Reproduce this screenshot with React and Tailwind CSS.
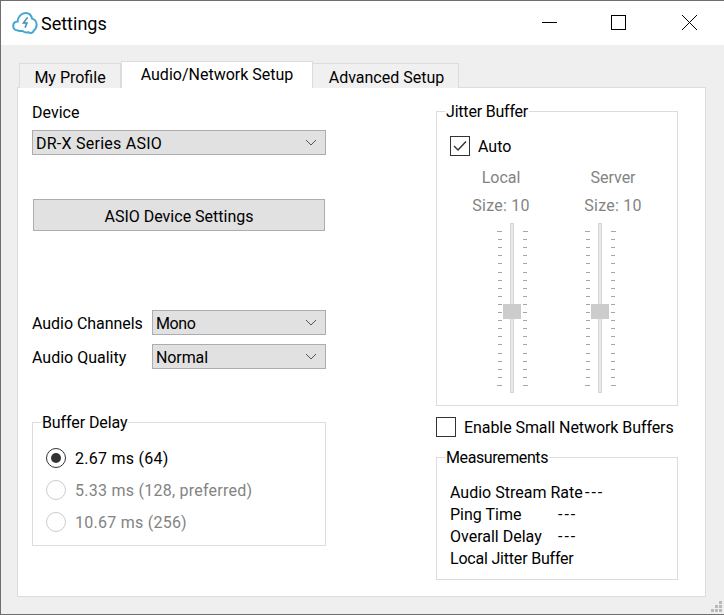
import React from 'react';

const tickRows = [231, 239, 247, 255, 263, 272, 280, 288, 296, 304, 312, 320, 328, 336, 344, 353, 361, 369, 377, 385];

// cloud logo in the title bar
function Logo() {
    return (
        <svg width="26" height="24" viewBox="0 0 26 24" className="shrink-0">
            <path
                d="M6 19.5 C2.8 19.5 1.2 17.2 1.2 15 C1.2 12.6 3 10.8 5.6 10.6 C6 5.6 9.6 2 13.6 2 C17 2 19.4 4.4 20 7.6 C22.8 8.4 24.6 10.8 24.6 13.8 C24.6 16.6 23.4 18.4 21.8 19.6 C21.2 22 18.6 22.6 16.8 21.2 C14.4 21.8 12 21.2 10.6 20 C9 20.2 7.4 20 6 19.5 Z"
                fill="#ffffff"
                stroke="#45a6d2"
                strokeWidth="2"
            />
            <path d="M15.6 6.4 L11.4 12 H15 L13 16.6" fill="none" stroke="#3b8fb8" strokeWidth="1.5" />
        </svg>
    );
}

function Chevron() {
    return (
        <svg width="12" height="7" viewBox="0 0 12 7" className="shrink-0">
            <path d="M1 1 L6 6 L11 1" fill="none" stroke="#555" strokeWidth="1" />
        </svg>
    );
}

function Select({ value, className, textClass }) {
    return (
        <div className={`flex h-[25px] items-center justify-between border border-[#adadad] bg-[#e1e1e1] pl-[3px] pr-[8px] ${className}`}>
            <span className={`pt-[2px] leading-[21px] ${textClass}`}>{value}</span>
            <Chevron />
        </div>
    );
}

function Group({ title, className, titleClass, children }) {
    return (
        <fieldset className={`border border-[#dcdcdc] ${className}`}>
            <legend className={`ml-[8px] px-[1px] pt-[2px] leading-[20px] ${titleClass}`}>{title}</legend>
            {children}
        </fieldset>
    );
}

function Check({ checked }) {
    return (
        <span className="flex h-[20px] w-[20px] shrink-0 items-center justify-center border border-[#333333] bg-white">
            {checked && (
                <svg width="14" height="12" viewBox="0 0 14 12">
                    <path d="M1 6 L5 10 L13 1.5" fill="none" stroke="#333333" strokeWidth="1.4" />
                </svg>
            )}
        </span>
    );
}

function Radio({ label, checked }) {
    return (
        <div className={`flex h-[32px] items-center gap-[9px] ${checked ? 'text-black' : 'text-[#838383]'}`}>
            <span className={`flex h-[20px] w-[20px] items-center justify-center rounded-full border ${checked ? 'border-[#333333]' : 'border-[#cccccc]'}`}>
                {checked && <span className="h-[10px] w-[10px] rounded-full bg-[#333333]" />}
            </span>
            <span className="pt-[1px] tracking-[0.25px]">{label}</span>
        </div>
    );
}

// vertical slider with tick marks on both sides
function Slider() {
    return (
        <div className="relative h-[170px] w-[32px]">
            <svg width="32" height="170" viewBox="0 0 32 170" className="block">
                {tickRows.map((y, i) => {
                    const long = i === 0 || i === tickRows.length - 1;
                    return (
                        <g key={y} stroke="#a8a89a" strokeWidth="1">
                            <line x1={long ? 0 : 1} x2="5" y1={y - 223 + 0.5} y2={y - 223 + 0.5} />
                            <line x1="26" x2={long ? 31 : 30} y1={y - 223 + 0.5} y2={y - 223 + 0.5} />
                        </g>
                    );
                })}
                <rect x="13.5" y="0.5" width="3" height="169" fill="#e7eae7" stroke="#d6d6d6" />
            </svg>
            <div className="absolute left-[6px] top-[81px] h-[15px] w-[18px] bg-[#cccccc]" />
        </div>
    );
}

function JitterColumn({ title, sliderClass }) {
    return (
        <div className="flex w-[88px] flex-col items-center text-[#838383]">
            <div className="h-[28px] leading-[28px]">{title}</div>
            <div className="h-[28px] leading-[28px] tracking-[0.25px]">Size: 10</div>
            <div className={`mt-[3px] ${sliderClass}`}>
                <Slider />
            </div>
        </div>
    );
}

function Measure({ label, value, labelWidth, labelClass }) {
    return (
        <div className="flex h-[22px] items-center">
            <span className={`${labelWidth} ${labelClass}`}>{label}</span>
            <span className="tracking-[2px]">{value}</span>
        </div>
    );
}

function AudioTab() {
    return (
        <div className="flex h-[510px] border border-[#dcdcdc] bg-white pl-[14px] pt-[12px]">
            {/* left column */}
            <div className="flex w-[294px] flex-col">
                <div className="h-[30px] leading-[26px]">Device</div>
                <Select value="DR-X Series ASIO" className="w-full" textClass="tracking-[0.25px]" />
                <button className="mx-[1px] mt-[44px] h-[32px] border border-[#adadad] bg-[#e1e1e1] pt-[3px] text-center">
                    ASIO Device Settings
                </button>
                <div className="mt-[79px] flex h-[25px] items-center justify-between">
                    <span className="pt-[2px] leading-[22px] tracking-[-0.05px]">Audio Channels</span>
                    <Select value="Mono" className="w-[174px]" textClass="tracking-[-0.4px]" />
                </div>
                <div className="mt-[9px] flex h-[25px] items-center justify-between">
                    <span className="pt-[2px] leading-[22px]">Audio Quality</span>
                    <Select value="Normal" className="w-[174px]" textClass="tracking-[-0.1px]" />
                </div>
                <Group title="Buffer Delay" className="mt-[42px] h-[135px]" titleClass="tracking-[-0.1px]">
                    <div className="pl-[13px] pt-[9px]">
                        <Radio label="2.67 ms (64)" checked />
                        <Radio label="5.33 ms (128, preferred)" />
                        <Radio label="10.67 ms (256)" />
                    </div>
                </Group>
            </div>

            {/* right column */}
            <div className="ml-[110px] flex w-[242px] flex-col">
                <Group title="Jitter Buffer" className="h-[306px]" titleClass="tracking-[-0.2px]">
                    <div className="pl-[13px]">
                        <div className="mt-[12px] flex h-[24px] items-center gap-[8px]">
                            <Check checked />
                            <span className="pt-[2px] leading-[22px]">Auto</span>
                        </div>
                        <div className="mt-[6px] flex gap-[24px] pl-[7px]">
                            <JitterColumn title="Local" sliderClass="ml-[24px]" />
                            <JitterColumn title="Server" sliderClass="mr-[24px]" />
                        </div>
                    </div>
                </Group>
                <div className="mt-[9px] flex h-[24px] items-center gap-[8px]">
                    <Check />
                    <span className="pt-[2px] leading-[22px] tracking-[-0.07px]">Enable Small Network Buffers</span>
                </div>
                <Group title="Measurements" className="mt-[7px] h-[134px]" titleClass="tracking-[-0.4px]">
                    <div className="pl-[13px] pt-[14px]">
                        <Measure label="Audio Stream Rate" value="---" labelWidth="w-[135px]" />
                        <Measure label="Ping Time" value="---" labelWidth="w-[108px]" />
                        <Measure label="Overall Delay" value="---" labelWidth="w-[108px]" />
                        <Measure label="Local Jitter Buffer" labelClass="tracking-[-0.2px]" />
                    </div>
                </Group>
            </div>
        </div>
    );
}

export default function App() {
    return (
        <div className="relative flex h-[615px] w-[724px] flex-col overflow-hidden border-b border-l border-t border-[#6e6e6e] bg-[#efefef] font-['Roboto','Liberation_Sans',sans-serif] text-[16px] text-black">
            {/* title bar */}
            <div className="flex h-[44px] shrink-0 items-center bg-white pl-[11px]">
                <Logo />
                <span className="ml-[3px] pt-[1px] text-[18px]">Settings</span>
                <div className="ml-auto flex items-center">
                    <svg width="16" height="16" viewBox="0 0 16 16" className="mr-[52px]">
                        <path d="M0 7.5 H15" stroke="#000" />
                    </svg>
                    <svg width="16" height="16" viewBox="0 0 16 16" className="mr-[55px]">
                        <rect x="1.5" y="0.5" width="14" height="14" fill="none" stroke="#000" />
                    </svg>
                    <svg width="16" height="16" viewBox="0 0 16 16" className="mr-[27px]">
                        <path d="M1 0 L16 15 M16 0 L1 15" stroke="#000" />
                    </svg>
                </div>
            </div>

            <div className="pl-[16px] pr-[18px] pt-[16px]">
                {/* tabs */}
                <div className="relative z-10 -mb-[1px] flex h-[27px] items-end pl-[2px]">
                    <div className="flex h-[25px] w-[102px] items-center justify-center border border-b-0 border-[#dcdcdc] bg-[#f0f0f0] pt-[3px]">My Profile</div>
                    <div className="flex h-[27px] w-[192px] items-center justify-center border border-b-0 border-[#dcdcdc] bg-white">Audio/Network Setup</div>
                    <div className="flex h-[25px] w-[146px] items-center justify-center border border-b-0 border-l-0 border-[#dcdcdc] bg-[#f0f0f0] pl-[2px] pt-[3px]">Advanced Setup</div>
                </div>
                <AudioTab />
            </div>

            {/* resize grip */}
            <svg width="11" height="11" viewBox="0 0 11 11" className="absolute left-[710px] top-[600px]">
                <g fill="#b9b9b9">
                    <rect x="8" y="0" width="3" height="3" />
                    <rect x="4" y="4" width="3" height="3" />
                    <rect x="8" y="4" width="3" height="3" />
                    <rect x="0" y="8" width="3" height="3" />
                    <rect x="4" y="8" width="3" height="3" />
                    <rect x="8" y="8" width="3" height="3" />
                </g>
            </svg>
        </div>
    );
}
